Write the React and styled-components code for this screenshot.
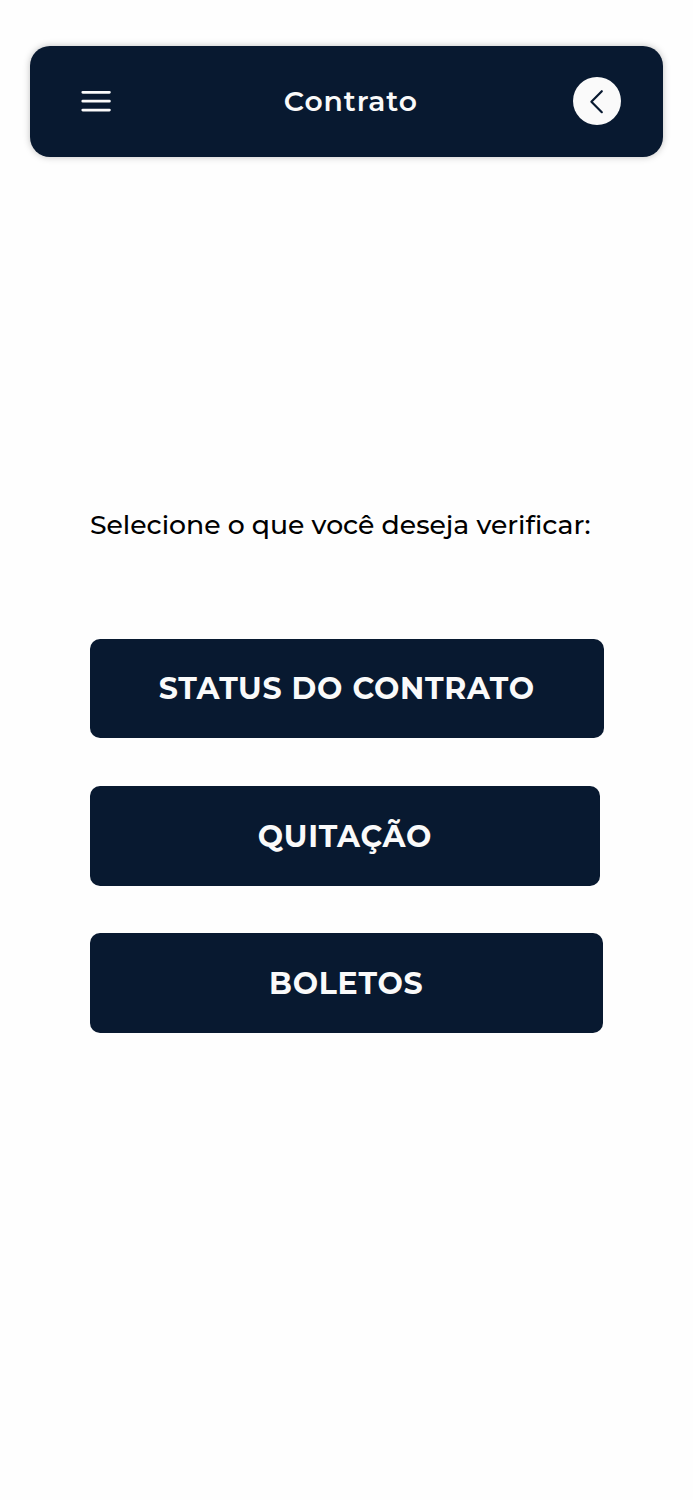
import React from "react";
import styled, { createGlobalStyle } from "styled-components";

const options = [
  { label: "STATUS DO CONTRATO", width: 513.7 },
  { label: "QUITAÇÃO", width: 510 },
  { label: "BOLETOS", width: 512.7 },
];

function App() {
  return (
    <Page>
      <GlobalStyle />
      <Header>
        <IconButton aria-label="Menu">
          <MenuIcon />
        </IconButton>
        <Title>Contrato</Title>
        <BackButton aria-label="Voltar">
          <BackIcon />
        </BackButton>
      </Header>
      <Content>
        <Prompt>Selecione o que você deseja verificar:</Prompt>
        <Options>
          {options.map((item) => (
            <OptionButton key={item.label} $width={item.width}>
              {item.label}
            </OptionButton>
          ))}
        </Options>
      </Content>
    </Page>
  );
}

export default App;

const MenuIcon = () => (
  <svg width="30" height="22" viewBox="0 0 30 22" fill="none">
    <path
      d="M1.8 2.3H28.4M1.8 11.2H28.4M1.8 20.1H28.4"
      stroke="#fafafa"
      strokeWidth="2.8"
      strokeLinecap="round"
    />
  </svg>
);

const BackIcon = () => (
  <svg width="48" height="48" viewBox="0 0 48 48" fill="none">
    <path
      d="M28.8 14.2L18.4 24.8L28.8 35.2"
      stroke="#081930"
      strokeWidth="2.2"
      strokeLinecap="round"
      strokeLinejoin="round"
    />
  </svg>
);

const GlobalStyle = createGlobalStyle`
  * {
    box-sizing: border-box;
  }
  body {
    margin: 0;
    background: #fefefe;
    font-family: Montserrat, Inter, sans-serif;
  }
`;

const Page = styled.div`
  width: 693px;
  height: 1500px;
  padding: 45.5px 30px 0 30.3px;
  background: #fefefe;
`;

const Header = styled.header`
  display: flex;
  align-items: center;
  height: 111px;
  padding: 0 42px 0 50.7px;
  border-radius: 20px;
  background: #081930;
  box-shadow: 0 0 7px rgba(0, 0, 0, 0.25);
`;

const IconButton = styled.button`
  display: flex;
  padding: 0;
  border: 0;
  background: none;
`;

const BackButton = styled(IconButton)`
  width: 48px;
  height: 48px;
  border-radius: 50%;
  background: #fafafa;
`;

const Title = styled.h1`
  flex: 1;
  margin: 0;
  padding-left: 172.8px;
  font-size: 28.2px;
  font-weight: 600;
  line-height: 34px;
  letter-spacing: 0.95px;
  white-space: nowrap;
  color: #fafafa;
`;

const Content = styled.main`
  padding: 350.4px 0 0 59.6px;
`;

const Prompt = styled.p`
  margin: 0;
  font-size: 26.7px;
  font-weight: 500;
  line-height: 36px;
  white-space: nowrap;
  color: #000;
`;

const Options = styled.div`
  display: flex;
  flex-direction: column;
  gap: 47.7px;
  margin-top: 95.9px;
`;

const OptionButton = styled.button`
  display: flex;
  align-items: center;
  justify-content: center;
  width: ${(props) => props.$width}px;
  height: 99.6px;
  padding: 0.5px 0 0;
  border: 0;
  border-radius: 10px;
  background: #081930;
  font-family: inherit;
  font-size: 30px;
  font-weight: 700;
  letter-spacing: 0.75px;
  white-space: nowrap;
  color: #fafafa;
`;
